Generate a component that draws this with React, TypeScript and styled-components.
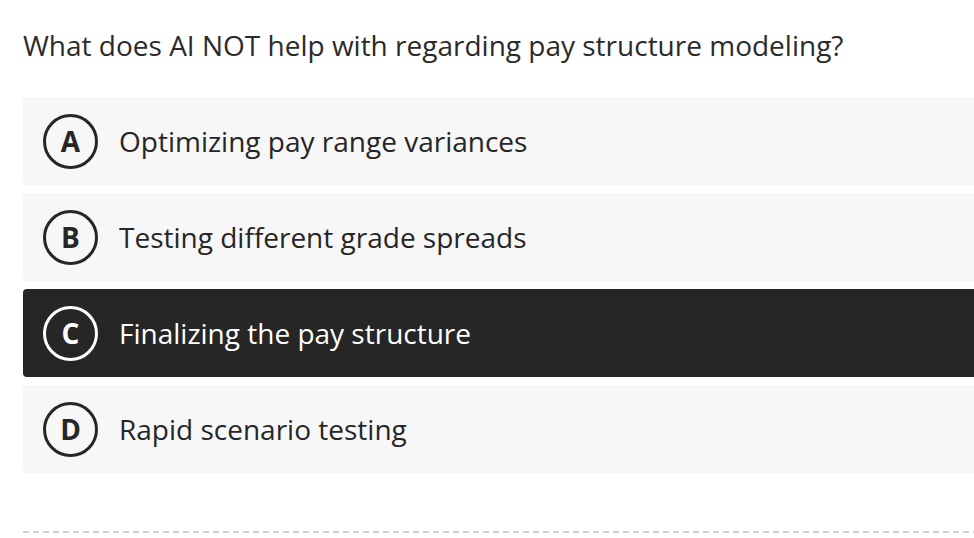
import React from "react";
import styled, { createGlobalStyle } from "styled-components";

const Global = createGlobalStyle`
  html, body { margin: 0; padding: 0; background: #ffffff; }
  body { font-family: "Open Sans", "Liberation Sans", sans-serif; overflow: hidden; }
`;

const Page = styled.div`
  padding: 26px 0 0 23px;
  width: 974px;
  box-sizing: border-box;
`;

const Question = styled.h1`
  margin: 0 0 33px 0;
  font-size: 28px;
  line-height: 38px;
  font-weight: 400;
  color: #2b2b2b;
`;

const Options = styled.div`
  display: flex;
  flex-direction: column;
  gap: 8px;
`;

const Option = styled.div<{ $selected?: boolean }>`
  display: flex;
  align-items: center;
  gap: 21px;
  height: 88px;
  padding-left: 20px;
  border-radius: 4px 0 0 4px;
  background: ${(p) => (p.$selected ? "#262626" : "#f7f7f7")};
  color: ${(p) => (p.$selected ? "#ffffff" : "#262626")};
`;

const Badge = styled.div<{ $selected?: boolean }>`
  width: 55px;
  height: 55px;
  box-sizing: border-box;
  border-radius: 50%;
  border: 3px solid ${(p) => (p.$selected ? "#ffffff" : "#262626")};
  display: flex;
  align-items: center;
  justify-content: center;
  font-weight: 700;
  font-size: 28px;
  line-height: 1;
  flex-shrink: 0;
`;

const Label = styled.span`
  font-size: 28px;
  line-height: 40px;
  font-weight: 400;
`;

const Divider = styled.div`
  margin-top: 58px;
  height: 2px;
  background-image: linear-gradient(to right, #d0d0d0 6px, transparent 6px);
  background-size: 10px 2px;
  background-repeat: repeat-x;
`;

const options = [
  { key: "A", text: "Optimizing pay range variances" },
  { key: "B", text: "Testing different grade spreads" },
  { key: "C", text: "Finalizing the pay structure", selected: true },
  { key: "D", text: "Rapid scenario testing" },
];

export default function App() {
  return (
    <Page>
      <Global />
      <Question>What does AI NOT help with regarding pay structure modeling?</Question>
      <Options>
        {options.map((o) => (
          <Option key={o.key} $selected={o.selected}>
            <Badge $selected={o.selected}>{o.key}</Badge>
            <Label>{o.text}</Label>
          </Option>
        ))}
      </Options>
      <Divider />
    </Page>
  );
}
